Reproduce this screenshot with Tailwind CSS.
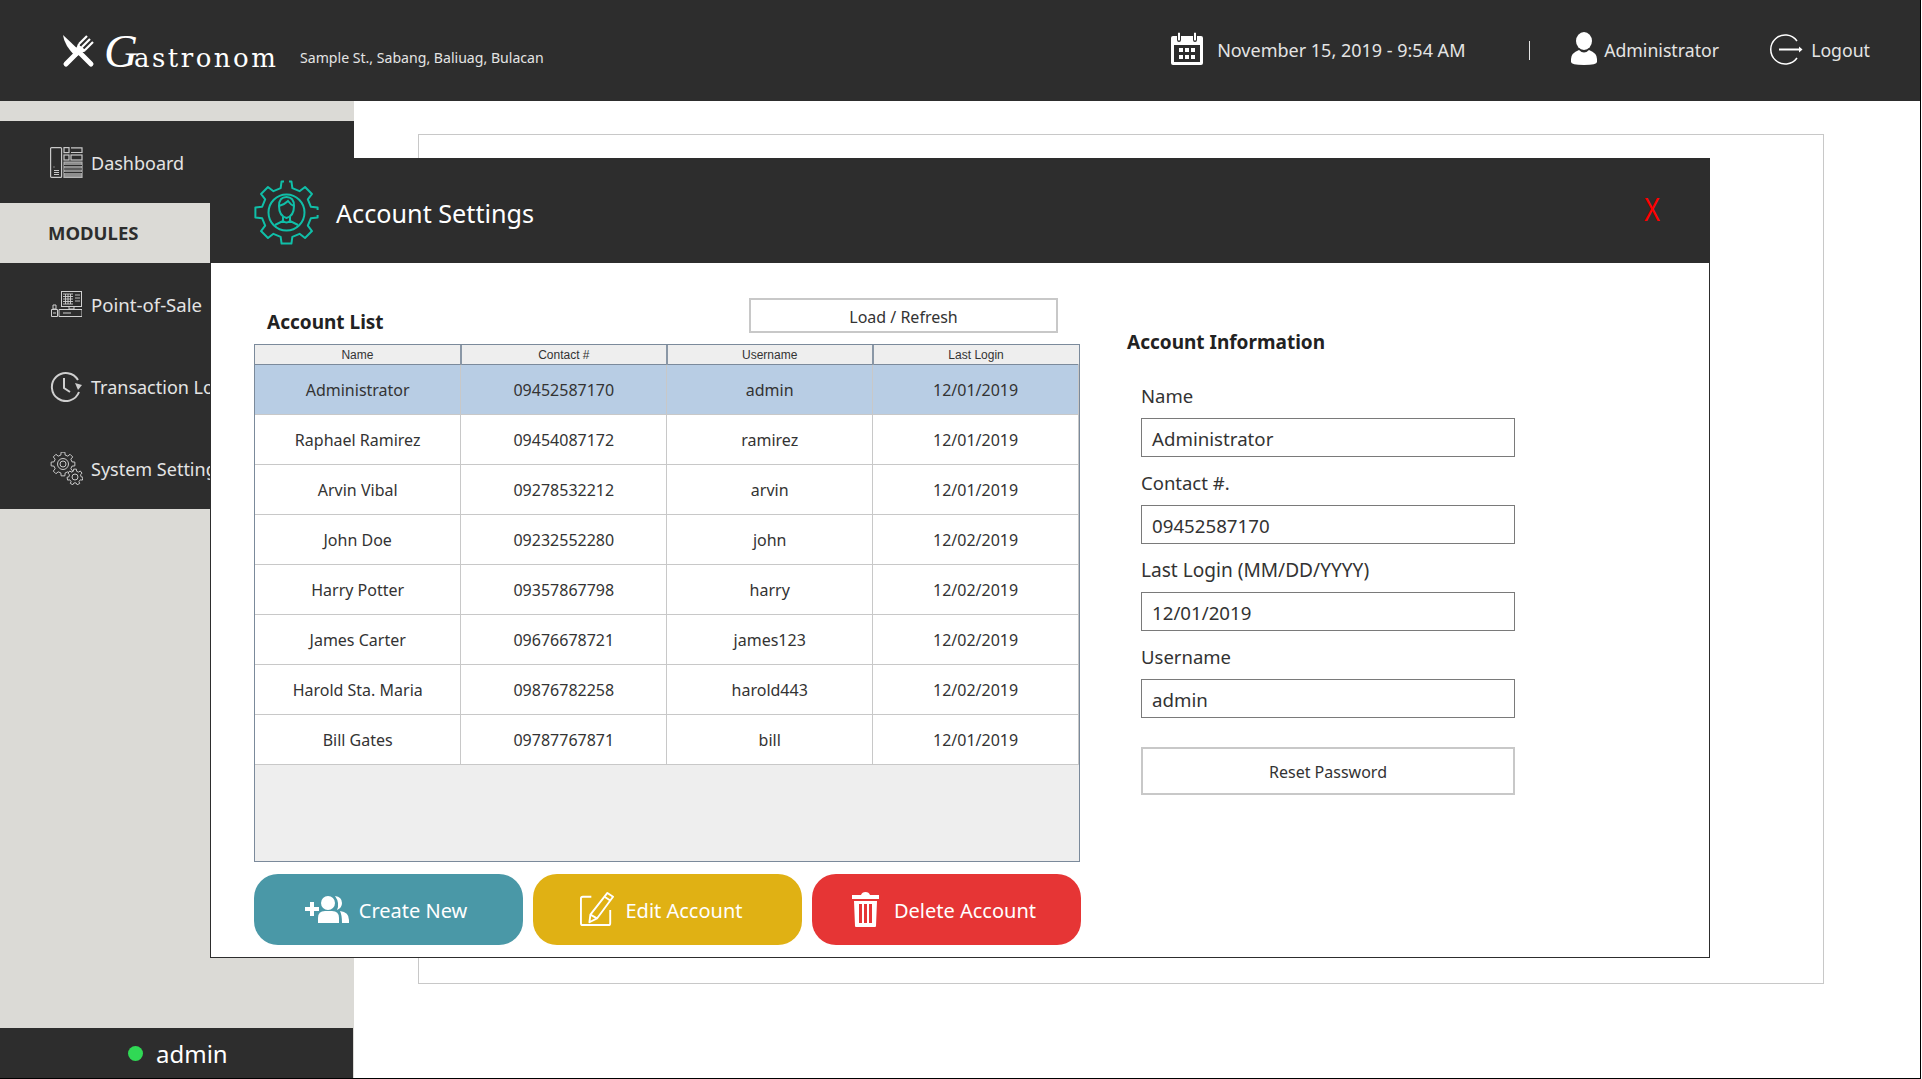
<!DOCTYPE html>
<html lang="en">
  <head>
    <meta charset="UTF-8" />
    <title>Gastronom - Account Settings</title>
    <script src="https://cdn.jsdelivr.net/npm/@tailwindcss/browser@4"></script>
  </head>
  <body class="bg-white overflow-hidden font-['Noto_Sans',sans-serif]">
    <div class="relative w-[1921px] h-[1079px] border-r border-b border-black flex flex-col overflow-hidden">
      <!-- top bar -->
      <header class="h-[101px] shrink-0 bg-[#2d2d2d] flex items-start text-[#e4e4e4]">
        <div class="flex items-start w-[238px] ml-[62px] mt-[35px] text-white">
          <svg class="w-[33px] h-[33px] shrink-0" viewBox="0 0 33 33" fill="none" stroke="#fff">
            <path d="M1 0 L19 17 L14 22 Q2 10 1 0 Z" fill="#fff" stroke="none" />
            <path d="M15 15 L29 29 M19 14 L4 29" stroke-width="5" stroke-linecap="round" />
            <path d="M17 9 L25 1 M20 12 L28 4 M23 15 L31 7 M17 9 L16 12 Q19 18 23 15" stroke-width="2.2" />
            <path d="M17 10 L23 15 L19 17 L16 13 Z" fill="#fff" stroke="none" />
          </svg>
          <div class="flex items-baseline ml-[9px] mt-[-12px]">
            <span class="w-[30px] text-[47px] leading-[56px] italic font-['Liberation_Serif',serif]">G</span>
            <span class="text-[26px] tracking-[2.5px] font-['DejaVu_Serif',serif] whitespace-nowrap">astronom</span>
          </div>
        </div>
        <span class="mt-[47px] text-[14.1px] leading-[22px] whitespace-nowrap">Sample St., Sabang, Baliuag, Bulacan</span>
        <div class="ml-auto flex items-center h-[101px] pb-[1px] text-[18px] mr-[50px]">
          <svg class="w-[32px] h-[33px] mb-[3px]" viewBox="0 0 32 33" fill="#fff">
            <path d="M2 4 H6 V8 Q6 10 8 10 Q10 10 10 8 V4 H22 V8 Q22 10 24 10 Q26 10 26 8 V4 H30 Q32 4 32 6 V31 Q32 33 30 33 H2 Q0 33 0 31 V6 Q0 4 2 4 Z M3 13 V30 H29 V13 Z" />
            <path d="M7 1 Q8 0 9 1 V8 Q8 9 7 8 Z M23 1 Q24 0 25 1 V8 Q24 9 23 8 Z" />
            <path d="M8 16 h4 v4 h-4z M14 16 h4 v4 h-4z M20 16 h4 v4 h-4z M8 23 h4 v4 h-4z M14 23 h4 v4 h-4z M20 23 h4 v4 h-4z" />
          </svg>
          <span class="ml-[14px] w-[312px]">November 15, 2019 - 9:54 AM</span>
          <span class="w-px h-[19px] bg-[#e4e4e4]"></span>
          <svg class="ml-[41px] w-[26px] h-[33px] mb-[3px]" viewBox="0 0 26 33" fill="#fff">
            <ellipse cx="13" cy="9" rx="8" ry="9" />
            <path d="M8 18 Q13 23 18 18 Q26 21 26 27 V30 Q26 33 13 33 Q0 33 0 30 V27 Q0 21 8 18 Z" />
          </svg>
          <span class="ml-[7px] w-[166px] text-[17.7px]">Administrator</span>
          <svg class="w-[33px] h-[31px] mb-[2px]" viewBox="0 0 33 31" fill="none" stroke="#fff" stroke-width="1.5">
            <path d="M27 7 A14.5 14.5 0 1 0 27 24" />
            <path d="M9 15.5 H31" stroke-width="2" />
            <path d="M29 12.5 L32.5 15.5 L29 18.5 Z" fill="#fff" stroke="none" />
          </svg>
          <span class="ml-[8px] text-[17.7px]">Logout</span>
        </div>
      </header>

      <div class="flex flex-1 min-h-0">
        <!-- side menu -->
        <aside class="w-[354px] shrink-0 bg-[#dbdad6] flex flex-col pt-[20px]">
          <a class="h-[82px] bg-[#2d2d2d] flex items-center pl-[50px] text-[18px] text-[#e4e4e4]">
            <svg class="w-[33px] h-[31px]" viewBox="0 0 33 31" fill="none" stroke="#c9c9c9" stroke-width="1.2">
              <rect x="0.6" y="0.6" width="11" height="29.8" rx="1" />
              <path d="M3.5 20 h1 M4 23.5 h5 M4 25.5 h5 M4 27.5 h5" />
              <rect x="14" y="0.6" width="5" height="5" /><rect x="14" y="8" width="5" height="5" />
              <path d="M21 0.8 H32 V5.5 H21" /><rect x="21" y="8" width="11" height="5" />
              <path d="M14 15 h18 v15.4 h-18 z" fill="#8d8d8d" stroke="#b5b5b5" />
              <path d="M14 18.5 h18 M14 22 h18 M14 25.5 h18" stroke="#2d2d2d" />
            </svg>
            <span class="ml-[8px] pt-[2px]">Dashboard</span>
          </a>
          <div class="h-[60px] flex items-center pl-[48px] text-[18.5px] font-bold text-[#2d2d2d]">MODULES</div>
          <nav class="h-[246px] bg-[#2d2d2d] text-[18px] text-[#e4e4e4] flex flex-col">
            <a class="h-[82px] flex items-center pl-[51px]">
              <svg class="w-[31px] h-[26px]" viewBox="0 0 31 26" fill="none" stroke="#d0d0d0">
                <rect x="10.5" y="0.5" width="20" height="15" />
                <path d="M12 3 h10 M12 5.5 h10 M12 8 h10 M12 10.5 h10 M12 13 h10 M14.5 3 v10 M17 3 v10 M19.5 3 v10 M24 4 h5 M24 7 h5 M24 10 h5" stroke-width="0.9" />
                <path d="M18 16 v2 h5 v-2 M8 18.5 h23 v7 h-23 z M12 22 h8" />
                <path d="M0.5 18.5 h6 v7 h-6 z M2 14 h3 v4 h-3 z M2 22 h3" />
              </svg>
              <span class="ml-[9px] pt-[2px] text-[18.6px] whitespace-nowrap">Point-of-Sale</span>
            </a>
            <a class="h-[82px] flex items-center pl-[49px]">
              <svg class="w-[33px] h-[31px]" viewBox="0 0 33 31" fill="none" stroke="#cfcfcf" stroke-width="2">
                <path d="M30 21 A14 14 0 1 1 29 9" />
                <path d="M15 7 V17 L21 21" />
                <path d="M26 12 L33 14 L29 19 Z" fill="#cfcfcf" stroke="none" />
              </svg>
              <span class="ml-[9px] pt-[2px] whitespace-nowrap">Transaction Log</span>
            </a>
            <a class="h-[82px] flex items-center pl-[50px]">
              <svg class="w-[33px] h-[33px]" viewBox="0 0 33 33" fill="none" stroke="#c9c9c9" stroke-width="1">
                <path data-gear="13,12,12,9.2,8" />
                <circle cx="13" cy="12" r="5.5" /><circle cx="13" cy="12" r="3" />
                <path data-gear="25,25,8,6,7" fill="#2d2d2d" />
                <circle cx="25" cy="25" r="3" />
              </svg>
              <span class="ml-[8px] pt-[2px] whitespace-nowrap">System Settings</span>
            </a>
          </nav>
          <div class="mt-auto h-[50px] w-[353px] bg-[#2d2d2d] flex items-center pl-[128px] pt-[1px] text-[24px] text-white">
            <span class="w-[15px] h-[15px] rounded-full bg-[#30d955]"></span>
            <span class="ml-[13px]">admin</span>
          </div>
        </aside>

        <main class="flex-1 pt-[33px] pl-[64px] pr-[96px] pb-[94px]">
          <div class="h-full border border-[#c8c8c8]"></div>
        </main>
      </div>

      <!-- account settings dialog -->
      <section class="absolute left-[210px] top-[158px] w-[1500px] h-[800px] border border-[#2d2d2d] border-t-0 bg-white flex flex-col">
        <div class="h-[105px] shrink-0 bg-[#2d2d2d] flex items-center -ml-px -mr-px pl-[44px] relative">
          <svg class="w-[65px] h-[65px] mt-[3px]" viewBox="0 0 65 65" fill="none" stroke="#10bfa8" stroke-width="2">
            <path data-gear="32.5,32.5,31.5,25,8" stroke-linejoin="round" />
            <path d="M30 -1 h5 v4 h-5z M62 30 h4 v5 h-4z" fill="#2d2d2d" stroke="none" />
            <circle cx="32.5" cy="32.5" r="18" />
            <path d="M25 26 Q25 17 32.500 17 Q40 17 40 26 Q40 36 32.5 38 Q25 36 25 26 Z" />
            <path d="M25 26 Q30 25 34 21 Q37 25 40 26" />
            <path d="M29 37 V41 L21 45 M36 37 V41 L44 45 M29 41 Q32.5 44 36 41" />
          </svg>
          <h1 class="ml-[17px] mt-[7px] text-[25.2px] text-white">Account Settings</h1>
          <button class="absolute left-[1431px] top-[30px] text-[33px] leading-[44px] text-[#ff0000] font-['Liberation_Sans',sans-serif] scale-x-75">X</button>
        </div>
        <div class="flex flex-1 min-h-0">
          <div class="w-[872px] pl-[43px] shrink-0 flex flex-col">
            <div class="h-[81px] flex items-start justify-between pr-[25px] pt-[35px]">
              <h2 class="ml-[13px] mt-[12px] text-[19px] leading-[24px] font-bold text-[#222]">Account List</h2>
              <button class="w-[309px] h-[35px] pt-[2px] border-2 border-[#c8c8c8] text-[16px] text-[#333]">Load / Refresh</button>
            </div>
            <div class="h-[518px] w-[826px] border border-[#7b8a9b] bg-[#eeeeee] overflow-hidden">
              <table class="w-[824px] table-fixed border-collapse text-center text-[16px] text-[#333]">
                <thead>
                  <tr class="h-[19px] text-[12px] leading-[14px] font-['Liberation_Sans',sans-serif] border-b border-[#7b8a9b]">
                    <th class="pt-[2px] font-normal border-r-2 border-[#8a97a6]">Name</th>
                    <th class="pt-[2px] font-normal border-r-2 border-[#8a97a6]">Contact #</th>
                    <th class="pt-[2px] font-normal border-r-2 border-[#8a97a6]">Username</th>
                    <th class="pt-[2px] font-normal">Last Login</th>
                  </tr>
                </thead>
                <tbody class="[&_td]:border-r [&_td]:border-[#c8c8c8] [&_td]:p-0 [&_td]:pt-[2px] [&_tr]:h-[50px] [&_tr]:bg-white [&_tr]:border-b [&_tr]:border-[#c8c8c8]">
                  <tr class="!bg-[#b8cde4]"><td>Administrator</td><td>09452587170</td><td>admin</td><td>12/01/2019</td></tr>
                  <tr><td>Raphael Ramirez</td><td>09454087172</td><td>ramirez</td><td>12/01/2019</td></tr>
                  <tr><td>Arvin Vibal</td><td>09278532212</td><td>arvin</td><td>12/01/2019</td></tr>
                  <tr><td>John Doe</td><td>09232552280</td><td>john</td><td>12/02/2019</td></tr>
                  <tr><td>Harry Potter</td><td>09357867798</td><td>harry</td><td>12/02/2019</td></tr>
                  <tr><td>James Carter</td><td>09676678721</td><td>james123</td><td>12/02/2019</td></tr>
                  <tr><td>Harold Sta. Maria</td><td>09876782258</td><td>harold443</td><td>12/02/2019</td></tr>
                  <tr><td>Bill Gates</td><td>09787767871</td><td>bill</td><td>12/01/2019</td></tr>
                </tbody>
              </table>
            </div>
            <div class="mt-[12px] flex gap-[10px] text-[20px] text-white">
              <button class="w-[269px] h-[71px] shrink-0 rounded-[24px] bg-[#4a98a7] flex items-center justify-center gap-[10px] pr-[5px]">
                <svg class="w-[44px] h-[27px]" viewBox="0 0 44 27" fill="#fff">
                  <path d="M0 11 H5 V6 H9 V11 H14 V15 H9 V20 H5 V15 H0 Z" />
                  <circle cx="23" cy="7" r="7" />
                  <path d="M13 27 V22 Q13 15 20 15 H27 Q34 15 34 22 V27 Z" />
                  <path d="M30 0 Q37 1 37 7 Q37 12 32 14 Q35 7 30 0 Z M35 15 Q44 16 44 24 V27 H37 Q37 19 35 15 Z" />
                </svg>
                <span class="pt-[2px]">Create New</span>
              </button>
              <button class="w-[269px] h-[71px] shrink-0 rounded-[24px] bg-[#e0b114] flex items-center justify-center gap-[11px] pr-[12px]">
                <svg class="w-[34px] h-[36px] mb-[1px]" viewBox="0 0 36 36" fill="none" stroke="#fff" stroke-width="2">
                  <path d="M12 5 H3 Q1 5 1 7 V33 Q1 35 3 35 H30 Q32 35 32 33 V19" />
                  <path d="M29 1 L35 5 L18 28 L10 32 L11 24 Z" stroke-linejoin="round" />
                  <path d="M26 5 L32 9 M11 24 L18 28" />
                </svg>
                <span class="pt-[2px]">Edit Account</span>
              </button>
              <button class="w-[269px] h-[71px] shrink-0 rounded-[24px] bg-[#e63535] flex items-center justify-center gap-[15px] pr-[5px]">
                <svg class="w-[27px] h-[35px] mb-[1px]" viewBox="0 0 27 35" fill="#fff">
                  <path d="M0 3 H9 Q10 0 13.500 0 Q17 0 18 3 H27 V7 H0 Z" />
                  <path d="M2 9 H25 L24 34 Q24 35 23 35 H4 Q3 35 3 34 Z M7 12 V31 H10 V12 Z M12 12 V31 H15 V12 Z M17 12 V31 H20 V12 Z" fill-rule="evenodd" />
                </svg>
                <span class="pt-[2px]">Delete Account</span>
              </button>
            </div>
          </div>

          <div class="ml-[44px] pt-[67px] w-[400px]">
            <h2 class="text-[19px] leading-[24px] font-bold text-[#222]">Account Information</h2>
            <form class="mt-[16px] ml-[14px] w-[374px] text-[18.5px] text-[#333]">
              <label class="block">
                <span class="block h-[48px] pt-[14px] leading-[24px]">Name</span>
                <span class="block h-[39px] border border-[#7a7a7a] pl-[10px] leading-[40px] text-[18.7px]">Administrator</span>
              </label>
              <label class="block">
                <span class="block h-[48px] pt-[14px] leading-[24px]">Contact #.</span>
                <span class="block h-[39px] border border-[#7a7a7a] pl-[10px] leading-[40px] text-[18.7px]">09452587170</span>
              </label>
              <label class="block">
                <span class="block h-[48px] pt-[14px] leading-[24px] text-[19.1px]">Last Login (MM/DD/YYYY)</span>
                <span class="block h-[39px] border border-[#7a7a7a] pl-[10px] leading-[40px] text-[18.7px]">12/01/2019</span>
              </label>
              <label class="block">
                <span class="block h-[48px] pt-[14px] leading-[24px]">Username</span>
                <span class="block h-[39px] border border-[#7a7a7a] pl-[10px] leading-[40px] text-[18.7px]">admin</span>
              </label>
              <button type="button" class="mt-[29px] w-[374px] h-[48px] pt-[2px] border-2 border-[#c8c8c8] text-[16px] text-[#333]">Reset Password</button>
            </form>
          </div>
        </div>
      </section>
    </div>

    <script>
      // gear outlines: data-gear="cx,cy,outer,inner,teeth"
      document.querySelectorAll('[data-gear]').forEach((el) => {
        const [cx, cy, ro, ri, n] = el.dataset.gear.split(',').map(Number);
        const step = (Math.PI * 2) / n;
        const pts = [];
        for (let i = 0; i < n; i++) {
          const a = i * step - Math.PI / 2;
          [[ri, -0.3], [ro, -0.2], [ro, 0.2], [ri, 0.3]].forEach(([r, k]) => {
            pts.push((cx + r * Math.cos(a + k * step)).toFixed(2) + ' ' + (cy + r * Math.sin(a + k * step)).toFixed(2));
          });
        }
        el.setAttribute('d', 'M' + pts.join(' L') + ' Z');
      });
    </script>
  </body>
</html>
